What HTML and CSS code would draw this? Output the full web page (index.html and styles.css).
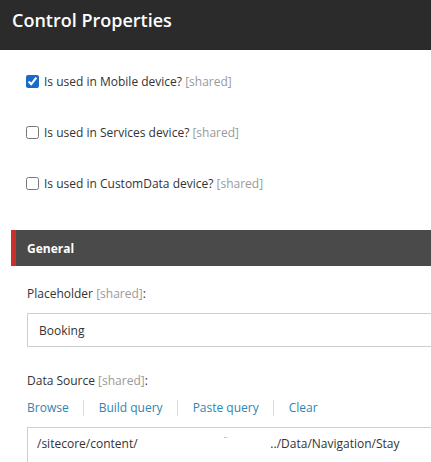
FILE: index.html
```html
<!DOCTYPE html>
<html>
<head>
<meta charset="utf-8">
<link rel="stylesheet" href="styles.css">
</head>
<body>
<header class="header"><h1 class="title">Control Properties</h1></header>
<main class="main">
  <div class="checks">
    <label class="check-row"><input type="checkbox" class="cb" checked><span>Is used in Mobile device? <span class="shared">[shared]</span></span></label>
    <label class="check-row"><input type="checkbox" class="cb"><span>Is used in Services device? <span class="shared">[shared]</span></span></label>
    <label class="check-row"><input type="checkbox" class="cb"><span>Is used in CustomData device? <span class="shared">[shared]</span></span></label>
  </div>
  <div class="section-bar">General</div>
  <div class="fields">
    <div class="field-label">Placeholder <span class="shared">[shared]</span>:</div>
    <div class="input">Booking</div>
    <div class="field-label label-ds">Data Source <span class="shared">[shared]</span>:</div>
    <nav class="links">
      <a class="link first">Browse</a>
      <a class="link">Build query</a>
      <a class="link">Paste query</a>
      <a class="link">Clear</a>
    </nav>
    <div class="input input-ds"><span>/sitecore/content/</span><span class="redact">¨</span><span class="tail">../Data/Navigation/Stay</span></div>
  </div>
</main>
</body>
</html>
```
FILE: styles.css
```css
html, body { margin: 0; padding: 0; background: #fff; }
body { font-family: "Open Sans", "Liberation Sans", sans-serif; color: #333; overflow: hidden; width: 431px; height: 462px; }
.header { height: 50px; background: #2b2b2b; padding-left: 12px; box-sizing: border-box; display: flex; align-items: flex-start; }
.title { margin: 0; font-size: 18px; font-weight: 600; color: #fff; line-height: 24px; padding-top: 8px; }
.main { display: flex; flex-direction: column; }
.checks { display: flex; flex-direction: column; gap: 31px; padding-top: 21px; padding-left: 26px; }
.check-row { display: flex; align-items: center; height: 20px; font-size: 12px; gap: 5px; }
.cb { margin: 0; width: 13px; height: 13px; accent-color: #1a6bc9; }
.shared { color: #9a9a9a; }
.section-bar { margin-top: 37px; margin-left: 11px; height: 36px; background: #4a4a4a; border-left: 5px solid #c8302c; color: #fff; font-weight: 700; font-size: 12px; display: flex; align-items: center; padding-left: 11px; }
.fields { display: flex; flex-direction: column; padding-left: 27px; }
.field-label { font-size: 12px; line-height: 18px; margin-top: 19px; }
.label-ds { margin-top: 25px; }
.input { margin-top: 10px; height: 34px; width: 420px; border: 1px solid #cfcfcf; box-sizing: border-box; font-size: 12px; display: flex; align-items: center; padding-left: 11px; color: #333; }
.input-ds { padding-left: 9px; height: 40px; align-items: flex-start; padding-top: 7px; }
.redact { margin-left: 85px; color: #777; font-size: 10px; line-height: 12px; }
.tail { margin-left: 42px; }
.links { display: flex; align-items: center; margin-top: 9px; height: 18px; font-size: 12px; }
.link { color: #2b86b3; padding: 0 14px 0 15px; border-left: 1px solid #dcdcdc; line-height: 16px; }
.link.first { padding-left: 0; border-left: none; }
```
